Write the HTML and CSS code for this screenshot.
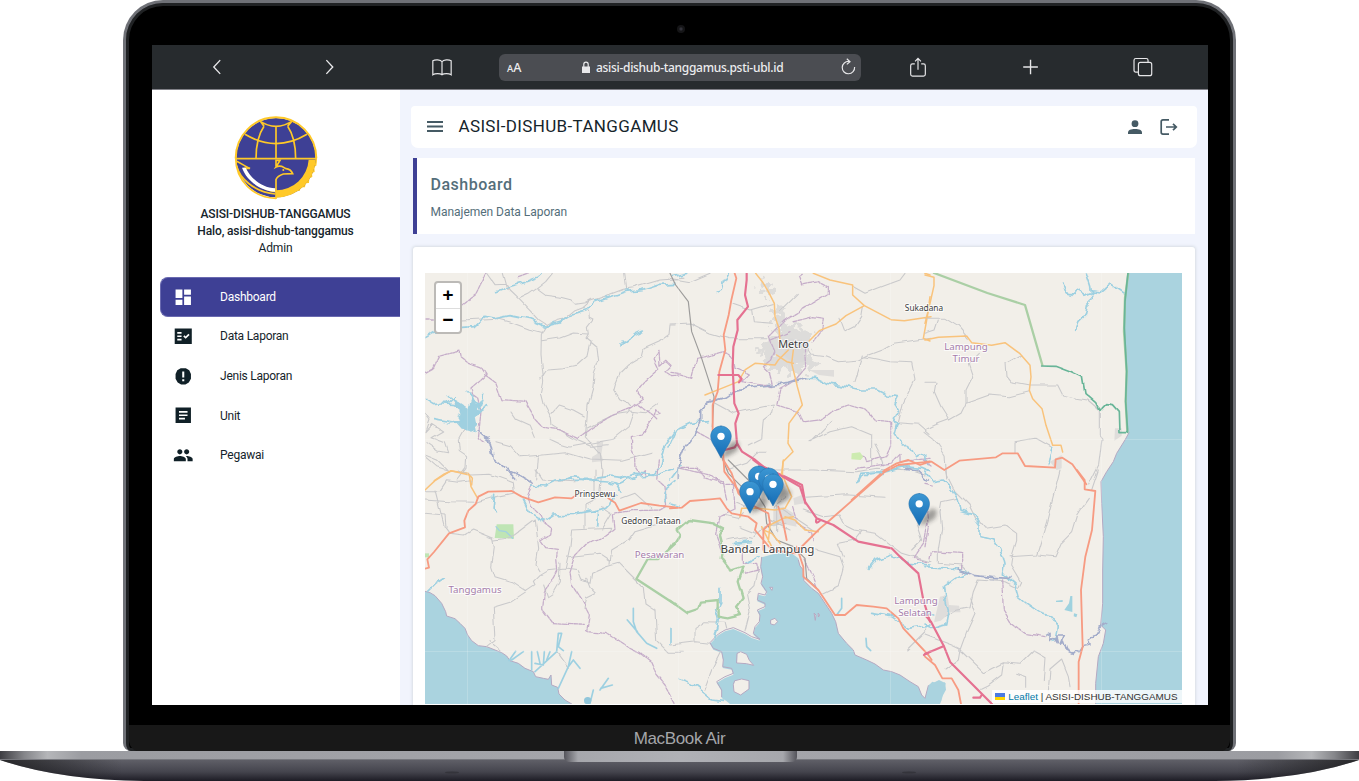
FILE: index.html
```html
<!DOCTYPE html>
<html lang="id">
<head>
<meta charset="utf-8">
<title>ASISI-DISHUB-TANGGAMUS</title>
<link rel="stylesheet" href="styles.css">
</head>
<body>
<div class="laptop">
<div class="lid">
<div class="bezel">
<div class="camera"></div>
<div class="screen">
<div class="browser-bar">
  <svg class="bi" viewBox="0 0 24 24"><path d="M15.500 4.500 8.500 12l7 7.500"/></svg>
  <svg class="bi" viewBox="0 0 24 24"><path d="M8 4.500l7 7.500-7 7.500"/></svg>
  <svg class="bi" viewBox="0 0 24 24"><path d="M12 6.300C10.500 3.800 4.500 3.600 2 5.200V20.500c2.500-1.600 8-1.600 10 0 2-1.600 7.500-1.600 10 0V5.200C19.500 3.600 13.500 3.800 12 6.300V20.500" stroke-width="1.300"/></svg>
  <div class="address">
    <span class="aa"><small>A</small>A</span>
    <span class="url"><svg class="lock" viewBox="0 0 8 12"><path d="M0 5.500h8V12H0z" fill="#e8e8ea"/><path d="M1.800 6V3.300a2.200 2.200 0 0 1 4.400 0V6" fill="none" stroke="#e8e8ea" stroke-width="1.200"/></svg>asisi-dishub-tanggamus.psti-ubl.id</span>
    <svg class="reload" viewBox="0 0 15 18"><path d="M8 3.400A6.200 6.200 0 1 0 13.600 9M5.800.8 9 3.700 5.800 6.400"/></svg>
  </div>
  <svg class="bi" viewBox="0 0 24 24"><path d="M8.500 8.500H6q-2 0-2 2V20q0 2 2 2h12q2 0 2-2v-9.500q0-2-2-2h-2.500M12 15V2.700M8.800 5.800 12 2.600l3.200 3.200" stroke-width="1.300"/></svg>
  <svg class="bi" viewBox="0 0 24 24"><path d="M11.500 4v16M3.500 12h16"/></svg>
  <svg class="bi" viewBox="0 0 24 24"><rect x="7" y="7" width="14.500" height="14.500" rx="2.200" stroke-width="1.300"/><path d="M7 17.500H4.200q-2 0-2-2V4.700q0-2 2-2H15.500q2 0 2 2V7" stroke-width="1.300"/></svg>
</div>
<div class="app">
<aside class="sidebar">
  <div class="profile">
    <svg class="logo" viewBox="342 344 252 256">
      <path d="M591 474a123 123 0 0 1-2 22l-6 3 1 16-8 3 1 12-9 4-1 14-10 1-2 12-12 0-4 11-13-2-5 9-14-2-7 8-12-3-7 9-13-3V474z" fill="#ffc928"/>
      <circle cx="468" cy="472" r="119" fill="#3e4095"/>
      <path d="M566 478h21a119 119 0 0 1-119 114v-22a98 98 0 0 0 98-92z" fill="#ffc928"/>
      <path d="M347 474a121 123 0 0 1 242 0" fill="none" stroke="#ffc928" stroke-width="6"/>
      <path d="M346 475h244M468 376v99M408 475q0-62 24-97M527 475q0-62-24-97M375 402q93 56 186 0M417 361q51 34 102 0M432 378l-12-17M503 378l14-17" fill="none" stroke="#ffc928" stroke-width="5"/>
      <path d="M348 482c10 3 26 17 42 22h-16c16 36 54 66 94 70" fill="none" stroke="#ffc928" stroke-width="5"/>
      <path d="M366 502h11c14 31 49 61 89 62v10c-45-2-86-33-100-72z" fill="#fff"/>
      <path d="M350 497c8 36 52 78 116 84M347 474c0 68 55 119 121 120" fill="none" stroke="#ffc928" stroke-width="5"/>
      <path d="M468 596V538q4-11 22-17l28-1q-6-14-20-15l-13-7q-10-2-17 2l12-20h-12v18" fill="none" stroke="#ffc928" stroke-width="5"/>
      <circle cx="490" cy="509" r="3" fill="#ffc928"/>
    </svg>
    <strong>ASISI-DISHUB-TANGGAMUS</strong>
    <strong>Halo, asisi-dishub-tanggamus</strong>
    <span>Admin</span>
  </div>
  <nav class="nav">
    <a class="item active"><svg viewBox="0 0 24 24"><path d="M3 13h8V3H3zm0 8h8v-6H3zm10 0h8V11h-8zm0-18v6h8V3z"/></svg>Dashboard</a>
    <a class="item"><svg viewBox="0 0 24 24"><path fill-rule="evenodd" d="M2 3h20v18H2zm8 14H5v-2h5zm0-4H5v-2h5zm0-4H5V7h5zm4.820 6L12 12.160l1.410-1.410 1.410 1.420L17.990 9l1.420 1.420z"/></svg>Data Laporan</a>
    <a class="item"><svg viewBox="0 0 24 24"><path fill-rule="evenodd" d="M9 2.500h6l4 2.500 2 4.500v5.500l-2.500 4.300-4 2.500h-5l-4-2.500L3 15V9.500L5 5zM10.800 6.500v7h2.400v-7zm0 9v2.300h2.400v-2.300z"/></svg>Jenis Laporan</a>
    <a class="item"><svg viewBox="0 0 24 24"><path fill-rule="evenodd" d="M3 3h18v18H3zm11 14H7v-2h7zm3-4H7v-2h10zm0-4H7V7h10z"/></svg>Unit</a>
    <a class="item"><svg viewBox="0 0 24 24"><path d="M16 11c1.660 0 2.990-1.340 2.990-3S17.660 5 16 5s-3 1.340-3 3 1.340 3 3 3zm-8 0c1.660 0 2.990-1.340 2.990-3S9.660 5 8 5 5 6.340 5 8s1.340 3 3 3zm0 2c-2.330 0-7 1.170-7 3.500V19h14v-2.500C15 14.170 10.330 13 8 13zm8 0c-.29 0-.62.020-.97.050 1.160.840 1.970 1.970 1.970 3.450V19h6v-2.500c0-2.330-4.670-3.500-7-3.500z"/></svg>Pegawai</a>
  </nav>
</aside>
<main class="main">
  <header class="topbar">
    <svg class="menu" viewBox="0 0 16 11"><path d="M0 1h16M0 5.500h16M0 10h16" stroke="#455a64" stroke-width="2"/></svg>
    <span class="brand">ASISI-DISHUB-TANGGAMUS</span>
    <svg class="user" viewBox="0 0 14 14"><circle cx="7" cy="3.700" r="3.400"/><path d="M0 14v-1.500C0 10 3 9 7 9s7 1 7 3.500V14z"/></svg>
    <svg class="exit" viewBox="0 0 18 16"><path d="M9 .9H3Q1.200.9 1.200 2.700v10.600q0 1.800 1.800 1.800h6M6 8h10M13 4.800 16.300 8 13 11.200"/></svg>
  </header>
  <section class="heading">
    <h1>Dashboard</h1>
    <p>Manajemen Data Laporan</p>
  </section>
  <section class="card">
  <div class="map-box">
  <svg class="map" viewBox="425 273 757 431">
    <defs>
      <linearGradient id="pin" x1="0" y1="0" x2="0" y2="1"><stop offset="0" stop-color="#3c97d3"/><stop offset="1" stop-color="#156cb5"/></linearGradient>
      <filter id="soft" x="-50%" y="-50%" width="200%" height="200%"><feGaussianBlur stdDeviation="6"/></filter>
      <filter id="meander" x="-5%" y="-5%" width="110%" height="110%" color-interpolation-filters="sRGB"><feTurbulence type="fractalNoise" baseFrequency=".04" numOctaves="1" seed="4"/><feDisplacementMap in="SourceGraphic" scale="26" xChannelSelector="R" yChannelSelector="G"/></filter>
      <filter id="drift" x="-5%" y="-5%" width="110%" height="110%" color-interpolation-filters="sRGB"><feTurbulence type="fractalNoise" baseFrequency=".025" numOctaves="1" seed="9"/><feDisplacementMap in="SourceGraphic" scale="16" xChannelSelector="R" yChannelSelector="G"/></filter>
      <filter id="scatter" x="-20%" y="-20%" width="140%" height="140%" color-interpolation-filters="sRGB"><feTurbulence type="fractalNoise" baseFrequency=".05" numOctaves="2" seed="2"/><feDisplacementMap in="SourceGraphic" scale="75" xChannelSelector="R" yChannelSelector="G"/></filter>
      <g id="marker"><path d="M0 0 14-30 38-52 54-44 48-22 22-6z" fill="#222" opacity=".4" filter="url(#soft)"/><path d="M0-96C-17-96-31-82-31-65c0 13 7 23 14 34L0 0l17-31c7-11 14-21 14-34C31-82 17-96 0-96z" fill="url(#pin)" stroke="#2672ad" stroke-width="1.500"/><circle cy="-65" r="11" fill="#fff"/></g>
    </defs>
    <rect x="425" y="273" width="757" height="431" fill="#f2efe9"/>
    <!-- north-west -->
    <g transform="translate(415 240) scale(.33333)">
      <path class="urban" d="M545 603h20l-6 40 6 20-34 4 0-16 16-10z"/>
      <path class="minor" d="M215 99l25 35 33-1 10 17 27 26 32 33 30 33 22 14 30-18 28-5 25-21 28-10 20-18 40-14 60-22 30-5 80-23 75-5M265 100l13 48M412 100l-20 25-26 20-25 18-30 14M365 146l28 20 41 5 33 8 15 14 30-5 18-10M520 210l3 25 11 5-17 22 3 20-7 12 33 27 5 42-14 38-3 40-15 55-8 95 45 50 5 50-7 70M394 258l-15 25-1 60 5 50 3 30-7 36 8 32 22 42 2 24 29 18 32 20 55 24 53-5M380 302l55-8 40-15 43 3M526 300l-11 50-28 25-40 8-50 4-20 30M408 520l22-25 45 15 33 18M629 99l6 46M780 255h-15l-3 28-30 23-45 20-6 24-44 26-20 20-15 35-6 22 15 23 25 12 13 15-12 15-40 6-35 17-45 23M657 518l-14 42-48 38-130 23-28-8-32-15M243 605l43 12 30 33 60-4 75-8 75 22 95 4 90-25M288 516l15 22 40 18 15 36M370 650l-5 70M30 520l15 20-12 35 20-22 30 20-35 20 40 15 10 30-30-5-35-25M30 650l35 30 32 10-30-30-37-15M150 565l-20 35 3 35 22 15-2 35-27 35M730 490l-40 28-45-5M138 240l50-2 55-3 40 10 60 23 42 10"/>
      <path class="border" d="M216 99l-16 30-17 35-42 33M30 237h25M30 401l25-14 19-38 58-16 4 18 26 20 38 13 13 20-45 40 5 20 15 10 10 40-8 80 18 14M206 404l37 27 18 48 68 5 28 48 28 30 45 7 57 26 45-33 58-35 60-24 35-25-20-25 25-30 42-37-15-30 15-25 3 45 17-15 17 16-19 18 20 12 18-2M670 494l45 34 20-5-10-14-10 20 12 12M715 530l-33 52-33 8 2 38 11 30 1 30 13 18 13-15 4 20M310 110l30-11"/>
      <path class="river" d="M30 290l25-16 80-12 45-2 30-28 25 5 50-10 60 12 46 20 45-12 28-20 50-15 25-26 92-32 50-5 50-16 50-3M245 155l45-17 38-10 45-17 12-12M612 318l50-36 20-9M612 321l12-18M30 478l25 16 45-5 20-18M780 575l-33 48-15 60-15 20-50-3-50 15-40-5-50 8-50-5-40 6"/>
      <path class="lake" d="M122 484l23 11 15 10 13-40 8 26 20-8-12 24 14 2-18 20 5 25-10 10 3 15-18-10-25-3-15-17-32 3 40-17-6-10 15-10-26-17z"/>
      <path class="river" d="M75 490l40 4 25 20M155 454l40 50 14-46M55 536l60 10 30-12M100 470l40 25M215 500l-35 20"/>
      <path class="dusk" d="M190 575l35 30 10 50 30 25 40 40"/>
      <path class="secondary" d="M58 722l30-20 21-9 50 7 13 15-2 20"/>
    </g>
    <!-- south-west -->
    <g transform="translate(415 470) scale(.33333)">
      <path class="sea" d="M30 364l15 4 15 9 20 23 12 25 3 13 25 8 15 14 15 15 8 20 12 17 20 15 25 3 25 10 20 8 15 10 10 14 25 8 20 15 25 10 7 15 23 5 15 3 8-13 2 30 18 7 4 20 18 18 20 12H30z"/>
      <path class="coast" d="M30 364l15 4 15 9 20 23 12 25 3 13 25 8 15 14 15 15 8 20 12 17 20 15 25 3 25 10 20 8 15 10 10 14 25 8 20 15 25 10 7 15 23 5 15 3 8-13 2 30 18 7 4 20 18 18 20 12"/>
      <path d="M245 163h50l2 43-58-2z" fill="#bfe5b4"/><path d="M30 250h12v12H30z" fill="#bfe5b4"/><path d="M243 170l10 12 20 3 20 20" fill="none" stroke="#a2d1e1" stroke-width="4"/>
      <path class="minor" d="M30 90l75 5 80 2 50-15 60-12M30 62h45l20-30 35 5 40-5M60 60l28 110 15 20 45 5 25-15 60 25 5 25-8 60 10 30 50 15 45 30M30 130l60 5 3 35M215 532l25-20-5-100 50-15 75-50-5-10 20-20 25-15 50-5 40 5 10 25 25 10 5-30 45-20 35-10 50 50 25 25 5 50 30 20 5 90 35 35h45M375 305l-12-20 8-50-10-85-60 45-25 10-40 5M450 300l15-70 5-50 120-5-5 15M435 280l-2 55-20 35-15 10-12-35M515 325l10 25 20 20-30 15-8 30M460 260l95-10 30 20M585 280l5-40 50-30 20-28 70-20M540 0v90l-30 15v70M620 85l40-15 50 45M560 110l30 20-30 50M225 515l30 25M430 550l30 42M360 0l20 30 100 5M130 0l35 15 60-2 70 25 3 30"/>
      <path class="border" d="M352 40l-15 40 13 30 25 25 10 20 25 20-3 20-30 18 15 20 35 5-2 30 3 35-10 20-30 40-5 55 30 40 95 5M780 700l-30-55-25-30-17-40-33-25-40-20-30-20-30-20-60-5 8-50-23-45-33-50-5-30 18-55 30-32 50-15 40-30-5-48 60-8 80-2 20-12-5-58-22-20 5-60"/>
      <path class="river" d="M345 45l45 3 30-15 50-5 45 0 60 5 40 10 50-25 60-3 50-18M236 70l-5 50 10 8M325 90l20 40 40 25 30-20 55-2 50-8 55-10 15-15 10-25M548 120l-3 50M600 38l15 25M780 35l-25 20-5 40M40 362l20-20 28-18"/>
      <path class="stream" d="M282 572l20-28M290 570l35-25M350 600v-55M360 580l25 5 3-40M367 545l8 35M405 545l-10 25M360 605l65-60 5-55 10 0-10 40 15 12M430 655l30-65 10-45M460 590l15-20 20 25M655 415l0 40 10 30 30 35 30 15M637 450l30 35M525 700l10-40M555 660l25-35M557 655l35-10"/>
      <circle cx="518" cy="692" r="11" fill="#91c6da"/>
      <path class="dusk" d="M275 0l45 18 30 20"/>
      <path class="secondary" d="M30 60l30-28 48-30 55 13 5 35 20 35"/>
      <path class="primary" d="M30 296l12-3-5-25 20-22 45-56 48-18-2-20 12-30 22-20 8-22 30-15 70-2 30 17 50 17 50-15 50 3 15-10M580 85l20 13 13 24 65-23 55 8 50 5"/>
      <path class="green" d="M780 222l-50 45-32 0-34 60 116 76"/>
    </g>
    <!-- north-centre -->
    <g transform="translate(670 260) scale(.33333)">
      <path class="urban scatter" d="M310 175l20-45 15 10 10 50 20 15 40-5 20 30-30 30 0 30 40 20-15 20-40-10-20 30-30-30-25 10-40-20 20-30-40 5 15-30 40-20 15-20-20-25zM270 60l25 10 15 30-15 20-20-30z"/>
      <path class="urban" d="M355 235l40 5 20 30-10 35-35 5-30-25zM480 330h12v20l-45-5-30-15z"/>
      <path class="minor" d="M0 55l60 10 60-25M0 192l60-3 60 30 60 17h110M180 130l60 20 70-20M245 150l5 35 60 5M385 100l-55 55M510 175l15 40 30-15 20-30 5-30M550 80l35 20 50-20 55-20 15-20M780 235l-110 15-35 20-40 15-30 15-60 5-40-15-40-5-25-40M580 285l-25 80M585 290l75 15 65 3 10 50-35 70-15 60 60 5 35 30M135 430l55 30 90-20 30-5-5 25-25 20-5 55-40 20M425 545l60-60M420 545l60-30 65-15 60 25v90M170 630l60-20 30-30 30 0M280 630h150l130 5 60-10 100 5 45 15M640 615l-10-30-15-30"/>
      <path class="border" d="M0 340l25 3 40 12 15-60 50-10 30-10 30 20 5 30 40 20-20 20 90 15-10-45-15-15 25-20 10-25-20-45 50-50 80-50 50-30 0-20-30-15-50 10-10-25 12-7M370 185l60-15 30 5-5 35-30 40M300 240l60-25M405 250l5 70-30 35-50 30-10 50 65 20 15 30 50-5 40-30 45-15 50 15 30 30 50 5v70l-15 35-60 15-5-15-15-2M560 625l100-15 30-30 0 25 90-10M80 515l45 25M30 625h50l20 25 60 15 10 55"/>
      <path d="M545 580l25-3 10 13-8 10-28-2z" fill="#cdebb0"/>
      <path class="river" d="M0 555l20-45 40-20 55-5M0 660l30-40M138 97l17-8 5-20 15-25M410 355l30 0 30 15 60 10 40 10 50 0 30 15 35 5-10 20 10 15-15 30 10 15-8 30 25 35 20-2 20 40 30-10 3 30M560 665l15-25 60-5 70-15 50 5 25 10M10 50l40-10"/>
      <path class="dusk" d="M410 355l-50 15-50 5-60 5-55 12-30 20-50 15-20 20 0 45-20 35-30 40-20 50 0 40M705 625l40 5 30 30"/>
      <path class="rail" d="M0 40l17 35 38 50 10 90 30 80 37 115-5 90M155 590l20 50 45 45 40 40"/>
      <path class="secondary" d="M257 40l20 25 18 30 18 35 2 40 12 35 3 40 0 15M430 40l50 20 68 15 0 30 35 32 80 42 40 3 80-12M583 137l-55 30-30 25-50 20-30 30M355 270l-30 30-10 15-60-5-30 20-20 35-50 20-50 20M370 270l-5 40 17 70 15 55-40 55-3 60 15 25-30 30-3 65-10 15M320 285l30 20 20 5M765 40l15 5M780 110l-8 60-12 65 20 8"/>
      <path class="primary" d="M194 40l5 15-15 65-8 45-15 60 5 45-18 65-5 60-15 40 0 80 30 40 5 80 45 60 15 25M545 720l100-90 35-20 35-10 35 15 30-10"/>
      <path class="motorway" d="M230 40l0 20-5 45 9 35-32 40 1 30-13 50-2 60 5 110 13 30-10 30 5 60 15 25 40 25 30 25 60 25 50 25 10 55M145 345h60l10 12-8 10M202 550l-8 12-30 8"/>
    </g>
    <!-- north-east -->
    <g transform="translate(925 240) scale(.33333)">
      <path class="sea" d="M612 99l-6 31-6 70-3 50 3 80 6 70-4 80 5 80 5 18-12 22-25 40-10 25-20 30-17 30 2 65 5 100-2 100v100l-6 65 15 15-7 40-15 40-8 80v65h259V99z"/>
      <path class="coast" d="M612 578l-12 22-25 40-10 25-20 30-17 30 2 65 5 100-2 100v100l-6 65 15 15-7 40-15 40-8 80v65"/>
      <path class="urban" d="M570 565h20v22l-22 15zM375 665l35-20 0 40-15 5z"/>
      <path class="minor" d="M0 235h60l40 25 30 35M0 280l30-10 10-30M160 340l-30 30 13 40-20 40v40l-15 30-35 20-25-40-20-45 5-28H0M123 490l70-25 60 5 60-15M288 345l-45 25 3 40 12 15 55 10 85 0 15 30 40 10 35 5 35 30 0 75 8 10-10 80-30 60M0 570l30-15 40-15M0 580l20 15 20 20 20 30 5 75M270 640v-35l60-10 45 25"/>
      <path class="river" d="M484 99l13 40 5 40-15 15-5 30-20 20-10 27M415 135l8 23 22 5 12-12 20 12 25-10 25 3 30-25 15 10 25 17M383 626l-5 20-5 25"/>
      <path class="secondary" d="M0 105l27 7 0 25-12 53-15 60M0 300l40-8 85-4 15 20 60 8 40-8 45 33 30 35 3 35-5 40 10 25 28 30 12 50 20 60 25 0 5 20"/>
      <path class="primary" d="M0 665l20 0 38 25 45-28 110-10 20-12h45l22 38 90 5 2-25 20-5 30 20 42 60"/>
      <path class="green" d="M27 99l160 60 113 36 52 180"/><path class="green" d="M610 99l-10 75-3 100 8 120-3 90 5 90"/>
      <path class="park wavy" d="M350 375l40 1 40 15 42 20 8 50 35 30 10 20 20-20 20 3 18 20 2 64h22"/><path class="park" d="M609 99l-9 85-2 80 7 130-3 90 6 93"/>
    </g>
    <!-- south-centre -->
    <g transform="translate(670 460) scale(.33333)">
      <path class="sea" d="M275 292l25-7 30-7 35 2 20 15 5 23 10 12 2 32 23 23 20 15 20 30 20 30 12 25 8 35 25 30 20 20 5 15 35 15 25 12 25 18 25 5 25 10 30 20 25 15 10 25 10 10 10-38 12-12 20 7 18-5 3 22-15 27-5 20H185l-15-12-15-10v-20l-15-25 25-15 25-10-5-15-27-5 2-20-5-25-25-10-10-17 25-26 20-12 25-7 35 15 20 12 25 8-20-18 5-20 13-15 2-20-8-15 23-10v-10l-23-10 3-20 20 5 5-10-17-25 5-20-6-30z"/>
      <path class="coast" d="M385 300l5 18 10 12 2 32 23 23 20 15 20 30 20 30 12 25 8 35 25 30 20 20 5 15 35 15 25 12 25 18 25 5 25 10 30 20 25 15 10 25 10 10 10-38M155 710v-20l-15-25 25-15 25-10-5-15-27-5 2-20-5-25-25-10-10-17 25-26 20-12 25-7 35 15 20 12 25 8-20-18 5-20 13-15 2-20-8-15 23-10v-10l-23-10 3-20 20 5 5-10-17-25 5-20-6-30 3-28"/>
      <path class="isle" d="M202 580l10-5 18 8 8 18 13 15-22-5-28-2zM195 662l20-5 22 5 0 25-25 18-20-10-2-20zM303 480l12-5 8 10-10 10-10-3zM300 382l8 0-2 8zM433 460l5 5-2 15zM445 460l4 5-3 5z"/>
      <path class="urban" d="M370 115l25-10 8 25-30 5zM310 145l30-5 30 20 10 40-50-10-20 10z"/>
      <path class="minor" d="M0 555l80-10 38 5M75 545v-40l30-20 60 2 5 20M150 580l-25 50-25 65M265 320l-10 60-25 25 10 50-15 60M255 230l30-30 60-10M400 150l60 20 50-5 15 30 30 15 60 10 80 60 85 25M440 270l70 20 10 30-15 60-50 25M520 290l-15-40 50-10 20-25M405 112l120-8 120 8M200 130l50 20M210 200l50 20M740 195l15 45-30 30M770 510l-60 60M320 135l0 80M340 150l90 60M300 180l60 30M160 165l40 10 20-20M170 240l50-10 30 5M350 110l-40 30"/>
      <path class="river" d="M28 655l40 15 60 50 30 4M150 385l0 40-10 20 8 30-5 30-10 25M598 325l20-25 45-15 60 25 57 5M605 460l60 10 50 35 65-10M0 130l30 5M230 310l40-20M190 250l55-5M3 505l0 45M560 65l20-25 60 0"/>
      <path class="stream" d="M515 415l0 30-15 20M588 535l2 25 12 12"/>
      <path class="border" d="M30 25l90 20 30 25 40 0 5 80-45 20-10 50 20 60M220 340l45-10-5-20-40 0v-50M365 140l15 50 45 25 5 30M405 300l25 50 15 40M770 190l-10 60-30 45 40 10M760 0l20 15"/>
      <path class="rail" d="M175 0l60 60 50 80 5 50 30 50 50 20 35 35 5 60 30 30"/>
      <path class="secondary" d="M340 0l-5 40 30 70-20 35-30 5-50-5-50 0-5 25M370 170l-30 5-40 20-5 50M345 170l30 10 30 30 40 5M335 40l-20 30M280 210l25 10 25 30M275 200l30 60"/>
      <path class="primary" d="M0 145l35-2 25-20 60-5 30-3 20 30 15 15 50 10 25 20-5 20 50 60 70 10 40-40 35-35 30-25 165-145 40-20 95-10M160 0l25 40 20 60 30 30 60 30 5 30-20 20 0 60M325 140l15 50 10 50M380 260l20 60 0 30 45 40 30 45 20 30 30 0 35-30 50 5 40 5 35 30 15 30 75 80 10 15"/>
      <path class="motorway" d="M250 0l20 15 60 30 60 35 15 45 35 50 50 20 75 50 100 20 25 25 55 50 15 80 20 65M440 175c-5 15 0 17 12 5M762 585l18-10"/>
      <path class="green wavy" d="M0 270l30-45-10-15 35-30 75 10 30 15-10 20 10 40-5 30 20 25 5 12 38-12-15 45 15 50-20 25 15 25-40 10-30-5v-50l-50 5-10 25-30 10L0 422"/>
    </g>
    <!-- south-east -->
    <g transform="translate(925 470) scale(.33333)">
      <path class="urban" d="M45 380l22-5 5 30 30 2 5 20-30 0-30 25-20 5z"/>
      <path class="minor" d="M65 0l5 25 15 30 50 50 20 40 25 30 60-10 35 25 0 25-15 50-3 20 30 50-10 20-40-20-80-5-15 35-10 45-40 8-30 20M100 85l-50 10-5 30 5 50-10 60 0 45 70 5 25 25M255 260l80-5 30-100 40-155M340 255l50 5 20-45 30-30 15-50 35-50M0 495l80 30 25 12-5 30-40 30M135 385l15 45-25 55-20 55 70 68 60-30 50 5 40-40 35 20-5 70M235 580l-5 35-40 30-20 10M275 610l30 10 0 35M370 660l5-60 35-30 20 50 5 30M500 60l20-60"/>
      <path class="river" d="M0 0l25 35 30-5 20 20 25 40 5 30 35 10 25 35 0 35 40 10 30 50 5 20-5 35 35 30 10 35 25 20 35 25 35 10 25 35-5 25-10 20M0 290l40 2 60 5 30 10-35 15-40 30 5 30 10 40-8 40-40 10-22-10M0 430l20 5"/>
      <path d="M393 392l20-2v6h-20zM436 378h6v48l-24-6 14-20zM447 430l10 3-3 9-8-3z" fill="#9fd2df"/>
      <path class="border" d="M0 230l10-60-5-50M15 270l5-25 90 5 0 45M230 330l5 90 25 40 40 30 60 10M0 40l25 5"/>
      <path class="dusk" d="M100 297l50 20 50 5 55 3M360 500l15-10 0 25 15-15 10 15-5-20 20 0-10 25 10-10 10 30 20 10 10-10 10 5 10-15 20-5-5-15 15-10 15-25 25-15"/>
      <path class="primary" d="M456 0l23 30v28l32 5-10 117-20 80-13 100 5 170-12 45 0 160M0 560l30 25 22 40h28l20 35 8 42"/>
      <path class="motorway" d="M0 435l18 20 38 72 20 50 125 125M0 552l57-24M145 683h20l5-8"/>
      <path class="sea" d="M0 702l12-57 30-15 20 10-12 50-5 12z"/>
    </g>
    <path class="tile" d="M467.500 273v431M678.500 273v431M890.500 273v431M1101.500 273v431M425 439.500h757M425 651.500h757"/>
    <g class="label">
      <text x="793.500" y="348" class="city">Metro</text>
      <text x="924" y="311" class="town">Sukadana</text>
      <text x="595" y="497" class="town">Pringsewu</text>
      <text x="651" y="524" class="town">Gedong Tataan</text>
      <text x="767.500" y="553" class="big">Bandar Lampung</text>
      <g class="region"><text x="966" y="349.500">Lampung</text><text x="966" y="361.500">Timur</text><text x="659.500" y="558">Pesawaran</text><text x="475" y="593">Tanggamus</text><text x="916" y="604">Lampung</text><text x="915" y="616">Selatan</text></g>
    </g>
    <g><use href="#marker" transform="translate(721 458) scale(.3333)"/><use href="#marker" transform="translate(758.700 498) scale(.3333)"/><use href="#marker" transform="translate(768.700 500) scale(.3333)"/><use href="#marker" transform="translate(773 506) scale(.3333)"/><use href="#marker" transform="translate(750 513.300) scale(.3333)"/><use href="#marker" transform="translate(919.200 525.500) scale(.3333)"/></g>
  </svg>
  <div class="zoom"><span>+</span><span>−</span></div>
  <div class="credit"><i class="flag"></i><a>Leaflet</a>&nbsp;| ASISI-DISHUB-TANGGAMUS</div>
  </div>
  </section>
</main>
</div>
</div>
</div>
<div class="chin">MacBook Air</div>
</div>
<svg class="base" viewBox="0 0 1359 30">
  <defs>
    <linearGradient id="body" x1="0" y1="0" x2="0" y2="1"><stop offset=".3" stop-color="#5f5f67"/><stop offset=".7" stop-color="#44444d"/><stop offset="1" stop-color="#1d1c25"/></linearGradient>
    <linearGradient id="edge"><stop offset="0" stop-color="#3d3d42"/><stop offset=".018" stop-color="#85868a"/><stop offset=".035" stop-color="#b5b6b9"/><stop offset=".06" stop-color="#9b9ca1"/><stop offset=".5" stop-color="#a6a7ac"/><stop offset=".94" stop-color="#9b9ca1"/><stop offset=".965" stop-color="#b5b6b9"/><stop offset=".982" stop-color="#85868a"/><stop offset="1" stop-color="#3d3d42"/></linearGradient>
    <linearGradient id="notch"><stop offset="0" stop-color="#54545b"/><stop offset=".06" stop-color="#a6a7ac"/><stop offset=".5" stop-color="#b0b1b6"/><stop offset=".94" stop-color="#a6a7ac"/><stop offset="1" stop-color="#54545b"/></linearGradient>
    <linearGradient id="ends"><stop offset="0" stop-color="#111" stop-opacity=".7"/><stop offset=".09" stop-color="#111" stop-opacity="0"/><stop offset=".91" stop-color="#111" stop-opacity="0"/><stop offset="1" stop-color="#111" stop-opacity=".7"/></linearGradient>
  </defs>
  <path d="M0 0h1359v9Q1300 29 1215 30H144Q59 29 0 9z" fill="url(#body)"/>
  <path d="M0 0h1359v9Q1300 29 1215 30H144Q59 29 0 9z" fill="url(#ends)"/>
  <path d="M0 0h1359v8H0z" fill="url(#edge)"/>
  <path d="M0 8.500h1359" stroke="#77787e"/>
  <path d="M564 0h233v6q0 5-7 5H571q-7 0-7-5z" fill="url(#notch)"/>
  <ellipse cx="452" cy="21.500" rx="7" ry="1" fill="#34343b"/><ellipse cx="909" cy="21.500" rx="7" ry="1" fill="#34343b"/>
</svg>
</div>
</body>
</html>
```
FILE: styles.css
```css
* { box-sizing: border-box; }
body { margin: 0; background: #fff; font-family: Roboto, "Liberation Sans", sans-serif; color: #15242b; overflow: hidden; }
.laptop { width: 1359px; height: 781px; display: flex; flex-direction: column; align-items: center; }
.lid { width: 1113px; height: 751px; flex: none; margin-right: 1px; border: 3px solid #6f7177; border-bottom: 0; border-radius: 40px 40px 8px 8px; background: #000; box-shadow: inset 0 0 0 3px #202224; overflow: hidden; display: flex; flex-direction: column; }
.bezel { height: 722px; flex: none; padding: 22px 26px 0; display: flex; flex-direction: column; }
.camera { width: 8px; height: 8px; margin: 0 523px 12px 525px; border-radius: 50%; background: radial-gradient(#32323a 15%, #151517 40%); }
.screen { width: 1056px; height: 660px; display: flex; flex-direction: column; overflow: hidden; background: #f1f4fd; }
.chin { flex: 1; margin: 0 3px; padding: 1px 0 0 1px; background: #181818; border-radius: 0 0 12px 12px; color: #a5a6aa; font: 17px/26px "Liberation Sans", sans-serif; letter-spacing: -.35px; text-align: center; }
.base { width: 1359px; height: 30px; display: block; flex: none; }

.browser-bar { height: 45px; flex: none; padding: 0 8px 0 9.200px; background: #272b2e; border-bottom: 1px solid #808087; display: grid; grid-template-columns: repeat(3, 112.600px) 1fr repeat(3, 112.600px); align-items: center; justify-items: center; }
.bi { width: 22px; height: 22px; fill: none; stroke: #e6e6e8; stroke-width: 1.500; }
.address { width: 362px; height: 27px; border-radius: 6px; background: #4b4d52; color: #ececee; display: flex; align-items: center; justify-content: space-between; padding: 0 5px 0 8px; font: 500 12px "Noto Sans", "Open Sans", sans-serif; }
.aa { font-size: 12.500px; letter-spacing: -.2px; }
.aa small { font-size: 9.500px; }
.url { display: flex; align-items: center; gap: 6px; padding-left: 3px; letter-spacing: -.3px; white-space: nowrap; }
.lock { width: 8px; height: 12px; }
.reload { width: 15px; height: 18px; fill: none; stroke: #e6e6e8; stroke-width: 1.200; }

.app { display: flex; flex: 1; min-height: 0; }
.sidebar { width: 248px; background: #fff; flex: none; }
.profile { padding-top: 24.500px; height: 187px; display: flex; flex-direction: column; align-items: center; font-size: 12px; line-height: 17px; letter-spacing: -.14px; white-space: nowrap; }
.profile strong { font-weight: 500; }
.logo { width: 84px; height: 85.300px; margin-bottom: 6.200px; flex: none; }
.nav { padding-left: 8px; }
.item { height: 39.600px; padding-left: 13.500px; display: flex; align-items: center; gap: 26.500px; font-size: 12px; letter-spacing: -.24px; }
.item svg { width: 20.500px; height: 20.500px; fill: #102027; }
.active { background: #3e4095; color: #fff; border-radius: 8px 0 0 8px; border: 1px solid #6a6ab0; border-right: 0; padding-left: 12.500px; }
.active svg { fill: #fff; }

.main { flex: 1; padding: 16px 11px 0; display: flex; flex-direction: column; min-width: 0; }
.topbar { height: 42px; flex: none; background: #fff; border-radius: 4px 4px 7px 7px; display: flex; align-items: center; padding: 0 19px 0 16px; }
.menu { width: 16px; height: 11px; margin: 0 16px 1px 0; }
.brand { flex: 1; font-size: 17px; letter-spacing: .35px; line-height: 20px; padding-bottom: 2px; }
.user { width: 14px; height: 14px; fill: #455a64; margin-right: 18px; }
.exit { width: 18px; height: 16px; fill: none; stroke: #455a64; stroke-width: 1.700; }
.heading { height: 76px; flex: none; margin: 10px 2px 0; background: #fff; border-left: 4px solid #3e4095; padding: 17px 14px 0; color: #546e7a; }
.heading h1 { margin: 0 0 9px; font-size: 16px; line-height: 20px; font-weight: 500; letter-spacing: .5px; }
.heading p { margin: 0; font-size: 12px; line-height: 16px; letter-spacing: -.03px; }
.card { flex: 1; min-height: 0; margin: 13px 2px 0; padding: 26px 13px 1px 12px; background: #fff; border-radius: 3px 3px 0 0; box-shadow: 0 0 3px 1px #d8dde4; }
.map-box { position: relative; width: 757px; height: 431px; overflow: hidden; }
.map { width: 757px; height: 431px; display: block; }
.map path { stroke-linejoin: round; stroke-linecap: round; }
.minor, .border, .river, .stream, .dusk, .rail, .secondary, .primary, .motorway, .green, .park, .coast, .tile { fill: none; }
.minor { stroke: #c9c9cb; stroke-width: 3.200; filter: url(#drift); }
.border { stroke: #c5adc9; stroke-width: 3.800; stroke-dasharray: 11 4; filter: url(#drift); }
.river { stroke: #9dd0e1; stroke-width: 5; filter: url(#meander); }
.stream { stroke: #9dd0e1; stroke-width: 5; }
.dusk { stroke: #a3acca; stroke-width: 5; filter: url(#meander); }
.lake { fill: #9fd0e0; filter: url(#meander); }
.wavy { filter: url(#drift); }
.scatter { filter: url(#scatter); }
.rail { stroke: #9d9c9b; stroke-width: 3.500; }
.secondary { stroke: #f9c37c; stroke-width: 4.500; }
.primary { stroke: #f79b82; stroke-width: 5.500; }
.motorway { stroke: #e57191; stroke-width: 6.500; }
.green { stroke: #aacfa5; stroke-width: 7; }
.park { stroke: #68b598; stroke-width: 5; }
.coast { stroke: #b5a9c2; stroke-width: 3; }
.sea { fill: #aad3df; }
.isle { fill: #f2efe9; stroke: #b5a9c2; stroke-width: 3; }
.urban { fill: #d9d8d7; opacity: .8; }
.tile { stroke: #fff; stroke-opacity: .18; }
.label text { font-family: "Noto Sans", "Open Sans", sans-serif; text-anchor: middle; fill: #3d3d3d; stroke: #fff; stroke-opacity: .75; stroke-width: 2px; paint-order: stroke; }
.label .city { font-size: 10.800px; }
.label .town { font-size: 8.300px; }
.label .big { font-size: 11.500px; }
.label .region text { font-size: 9.700px; fill: #a67dab; }
.zoom { position: absolute; left: 9px; top: 8px; width: 28px; height: 53px; border: 2px solid #bcbab7; border-radius: 4px; background: #fff; display: grid; grid-template-rows: 1fr 1fr; color: #000; font: bold 19px/27px "Liberation Mono", monospace; text-align: center; }
.zoom span { height: 24px; padding-left: 1px; }
.zoom span + span { border-top: 1px solid #ddd; line-height: 24px; }
.credit { position: absolute; right: 0; bottom: 1px; height: 13px; padding: 0 4px 0 3px; background: rgba(255,255,255,.8); display: flex; align-items: center; color: #333; font: 9.900px/13px "Liberation Sans", sans-serif; white-space: nowrap; }
.credit a { color: #0078a8; }
.flag { width: 10px; height: 7px; margin-right: 3px; background: linear-gradient(#4c7be1 55%, #ffd500 55%); }
```
